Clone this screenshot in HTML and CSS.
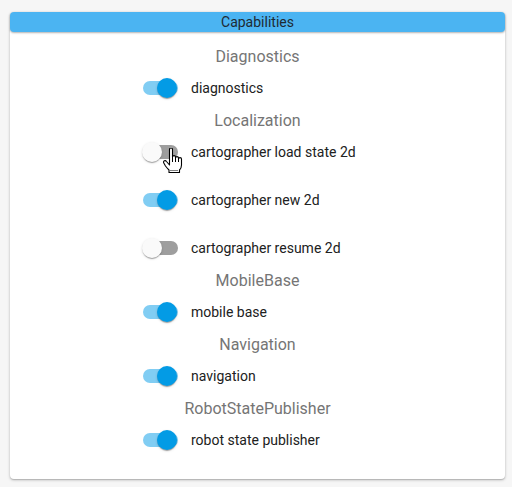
FILE: index.html
```html
<!DOCTYPE html>
<html>
<head>
<meta charset="utf-8">
<link rel="stylesheet" href="styles.css">
</head>
<body>
<div class="card">
  <div class="card-header">Capabilities</div>
  <div class="card-body">
    <div class="group">
      <div class="group-title">Diagnostics</div>
      <label class="row"><span class="switch on"><span class="track"></span><span class="thumb"></span></span><span class="label">diagnostics</span></label>
    </div>
    <div class="group">
      <div class="group-title">Localization</div>
      <label class="row cursor-row"><span class="switch"><span class="track"></span><span class="thumb"></span></span><span class="label">cartographer load state 2d</span>
        <svg class="cursor" width="20" height="26" viewBox="0 0 20 26">
          <path d="M6.5 1.5 C6.5 0.7 7.2 0 8 0 C8.8 0 9.5 0.7 9.5 1.5 V9 C9.5 8.2 10.2 7.6 11 7.6 C11.8 7.6 12.5 8.2 12.5 9 V10 C12.5 9.2 13.2 8.6 14 8.6 C14.8 8.6 15.5 9.2 15.5 10 V11 C15.5 10.2 16.2 9.6 17 9.6 C17.8 9.6 18.5 10.2 18.5 11 V17 C18.5 19 17.5 21 16.5 22 V24.5 H6 V22 C5 21 3.5 19.5 2.5 18 L0.8 15 C0.3 14.2 0.6 13.2 1.4 12.8 C2.2 12.4 3 12.8 3.5 13.5 L6.5 17 Z" fill="#fff" stroke="#000" stroke-width="1.1" stroke-linejoin="round"/>
          <path d="M9.5 9 V14 M12.5 10 V14 M15.5 11 V14" stroke="#000" stroke-width="1"/>
          <path d="M7.5 22.5 H15" stroke="#000" stroke-width="1" stroke-dasharray="1 1"/>
        </svg>
      </label>
      <label class="row"><span class="switch on"><span class="track"></span><span class="thumb"></span></span><span class="label">cartographer new 2d</span></label>
      <label class="row"><span class="switch"><span class="track"></span><span class="thumb"></span></span><span class="label">cartographer resume 2d</span></label>
    </div>
    <div class="group">
      <div class="group-title">MobileBase</div>
      <label class="row"><span class="switch on"><span class="track"></span><span class="thumb"></span></span><span class="label">mobile base</span></label>
    </div>
    <div class="group">
      <div class="group-title">Navigation</div>
      <label class="row"><span class="switch on"><span class="track"></span><span class="thumb"></span></span><span class="label">navigation</span></label>
    </div>
    <div class="group">
      <div class="group-title">RobotStatePublisher</div>
      <label class="row"><span class="switch on"><span class="track"></span><span class="thumb"></span></span><span class="label">robot state publisher</span></label>
    </div>
  </div>
</div>
</body>
</html>
```

FILE: styles.css
```css
html, body {
  margin: 0;
  padding: 0;
}
body {
  background: #f6f6f6;
  font-family: Roboto, "Liberation Sans", sans-serif;
  padding: 12px 7px 8px 10px;
}
.card {
  background: #fff;
  border-radius: 4px;
  height: 467px;
  box-shadow: 0 1px 3px rgba(0,0,0,0.25), 0 1px 1px rgba(0,0,0,0.12);
}
.card-header {
  background: #4bb4f2;
  height: 20px;
  line-height: 20px;
  border-radius: 4px;
  text-align: center;
  font-size: 14px;
  color: #1e2a33;
  box-shadow: 0 1px 2px rgba(0,0,0,0.3);
}
.card-body {
  padding-top: 8px;
  display: flex;
  flex-direction: column;
}
.group {
  display: flex;
  flex-direction: column;
  gap: 16px;
}
.group-title {
  box-sizing: border-box;
  height: 32px;
  padding-top: 1px;
  line-height: 31px;
  text-align: center;
  font-size: 16px;
  color: #757575;
  margin-bottom: -16px;
}
.row {
  height: 32px;
  display: flex;
  align-items: center;
  padding-left: 132px;
  position: relative;
}
.switch {
  position: relative;
  width: 36px;
  height: 20px;
  margin-right: 13px;
}
.track {
  position: absolute;
  left: 1px;
  top: 3px;
  width: 35px;
  height: 14px;
  border-radius: 7px;
  background: #9e9e9e;
}
.thumb {
  position: absolute;
  left: 0;
  top: 0;
  width: 20px;
  height: 20px;
  border-radius: 50%;
  background: #fafafa;
  box-shadow: 0 2px 1px -1px rgba(0,0,0,0.2), 0 1px 1px rgba(0,0,0,0.14), 0 1px 3px rgba(0,0,0,0.12);
}
.switch.on .track {
  background: #81cdf3;
}
.switch.on .thumb {
  left: 15px;
  background: #039be5;
}
.label {
  font-size: 14px;
  color: #212121;
}
.cursor {
  position: absolute;
  left: 153px;
  top: 12px;
}
```
